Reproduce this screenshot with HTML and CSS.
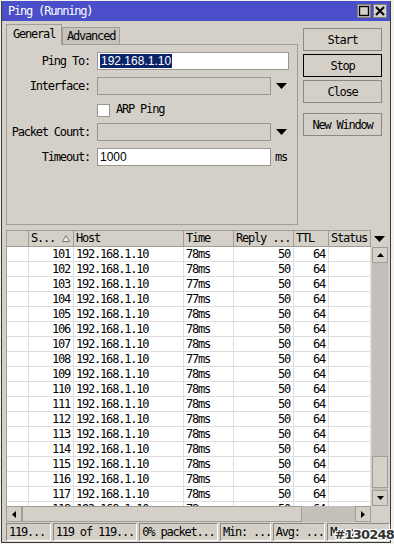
FILE: index.html
```html
<!DOCTYPE html>
<html lang="en">
<head>
    <meta charset="UTF-8">
    <meta name="viewport" content="width=device-width, initial-scale=1.0">
    <title>Ping (Running)</title>
    <link rel="stylesheet" href="styles.css">
</head>
<body>
    <div class="window">
        <div class="titlebar">
            <span class="title">Ping (Running)</span>
            <div class="title-buttons">
                <span class="tbtn"><svg width="12" height="12" viewBox="0 0 12 12"><rect x="1.5" y="1.5" width="9" height="9" fill="none" stroke="#000" stroke-width="1.4"/></svg></span>
                <span class="tbtn"><svg width="12" height="12" viewBox="0 0 12 12"><path d="M2 2 L10 10 M10 2 L2 10" stroke="#000" stroke-width="2"/></svg></span>
            </div>
        </div>

        <div class="top">
            <div class="tabs-area">
                <div class="tabs">
                    <div class="tab active">General</div>
                    <div class="tab">Advanced</div>
                </div>
                <div class="panel">
                    <div class="row">
                        <span class="label">Ping To:</span>
                        <span class="field wide"><span class="selected">192.168.1.10</span></span>
                    </div>
                    <div class="row">
                        <span class="label">Interface:</span>
                        <span class="field disabled"></span>
                        <span class="drop"><svg width="11" height="6" viewBox="0 0 11 6"><polygon points="0,0 11,0 5.5,6" fill="#000"/></svg></span>
                    </div>
                    <div class="row short">
                        <span class="label"></span>
                        <span class="check"></span>
                        <span class="check-label">ARP Ping</span>
                    </div>
                    <div class="row">
                        <span class="label">Packet Count:</span>
                        <span class="field disabled"></span>
                        <span class="drop"><svg width="11" height="6" viewBox="0 0 11 6"><polygon points="0,0 11,0 5.5,6" fill="#000"/></svg></span>
                    </div>
                    <div class="row">
                        <span class="label">Timeout:</span>
                        <span class="field">1000</span>
                        <span class="unit">ms</span>
                    </div>
                </div>
            </div>
            <div class="actions">
                <button class="btn">Start</button>
                <button class="btn focused">Stop</button>
                <button class="btn">Close</button>
                <button class="btn spaced">New Window</button>
            </div>
        </div>

        <div class="table">
            <div class="thead">
                <div class="th"></div>
                <div class="th">S...<svg class="sort" width="8" height="7" viewBox="0 0 8 7"><polygon points="4,0.5 7.5,6.5 0.5,6.5" fill="#eee" stroke="#777"/></svg></div>
                <div class="th">Host</div>
                <div class="th">Time</div>
                <div class="th">Reply ...</div>
                <div class="th">TTL</div>
                <div class="th">Status</div>
                <div class="th menu"><svg width="11" height="6" viewBox="0 0 11 6"><polygon points="0,0 11,0 5.5,6" fill="#000"/></svg></div>
            </div>
            <div class="tbody">
                <div class="rows">
                    <div class="tr"><span></span><span class="num">101</span><span>192.168.1.10</span><span>78ms</span><span class="num">50</span><span class="num">64</span><span></span></div>
                    <div class="tr"><span></span><span class="num">102</span><span>192.168.1.10</span><span>78ms</span><span class="num">50</span><span class="num">64</span><span></span></div>
                    <div class="tr"><span></span><span class="num">103</span><span>192.168.1.10</span><span>77ms</span><span class="num">50</span><span class="num">64</span><span></span></div>
                    <div class="tr"><span></span><span class="num">104</span><span>192.168.1.10</span><span>77ms</span><span class="num">50</span><span class="num">64</span><span></span></div>
                    <div class="tr"><span></span><span class="num">105</span><span>192.168.1.10</span><span>78ms</span><span class="num">50</span><span class="num">64</span><span></span></div>
                    <div class="tr"><span></span><span class="num">106</span><span>192.168.1.10</span><span>78ms</span><span class="num">50</span><span class="num">64</span><span></span></div>
                    <div class="tr"><span></span><span class="num">107</span><span>192.168.1.10</span><span>78ms</span><span class="num">50</span><span class="num">64</span><span></span></div>
                    <div class="tr"><span></span><span class="num">108</span><span>192.168.1.10</span><span>77ms</span><span class="num">50</span><span class="num">64</span><span></span></div>
                    <div class="tr"><span></span><span class="num">109</span><span>192.168.1.10</span><span>78ms</span><span class="num">50</span><span class="num">64</span><span></span></div>
                    <div class="tr"><span></span><span class="num">110</span><span>192.168.1.10</span><span>78ms</span><span class="num">50</span><span class="num">64</span><span></span></div>
                    <div class="tr"><span></span><span class="num">111</span><span>192.168.1.10</span><span>78ms</span><span class="num">50</span><span class="num">64</span><span></span></div>
                    <div class="tr"><span></span><span class="num">112</span><span>192.168.1.10</span><span>78ms</span><span class="num">50</span><span class="num">64</span><span></span></div>
                    <div class="tr"><span></span><span class="num">113</span><span>192.168.1.10</span><span>78ms</span><span class="num">50</span><span class="num">64</span><span></span></div>
                    <div class="tr"><span></span><span class="num">114</span><span>192.168.1.10</span><span>78ms</span><span class="num">50</span><span class="num">64</span><span></span></div>
                    <div class="tr"><span></span><span class="num">115</span><span>192.168.1.10</span><span>78ms</span><span class="num">50</span><span class="num">64</span><span></span></div>
                    <div class="tr"><span></span><span class="num">116</span><span>192.168.1.10</span><span>78ms</span><span class="num">50</span><span class="num">64</span><span></span></div>
                    <div class="tr"><span></span><span class="num">117</span><span>192.168.1.10</span><span>78ms</span><span class="num">50</span><span class="num">64</span><span></span></div>
                    <div class="tr"><span></span><span class="num">118</span><span>192.168.1.10</span><span>78ms</span><span class="num">50</span><span class="num">64</span><span></span></div>
                </div>
                <div class="vscroll">
                    <span class="sbtn"><svg width="7" height="4" viewBox="0 0 7 4"><polygon points="3.5,0 7,4 0,4" fill="#000"/></svg></span>
                    <span class="vtrack"></span>
                    <span class="vthumb"></span>
                    <span class="vtrack small"></span>
                    <span class="sbtn"><svg width="7" height="4" viewBox="0 0 7 4"><polygon points="0,0 7,0 3.5,4" fill="#000"/></svg></span>
                </div>
            </div>
            <div class="hscroll">
                <span class="sbtn"><svg width="4" height="7" viewBox="0 0 4 7"><polygon points="4,0 4,7 0,3.5" fill="#000"/></svg></span>
                <span class="hthumb"></span>
                <span class="htrack"></span>
                <span class="sbtn"><svg width="4" height="7" viewBox="0 0 4 7"><polygon points="0,0 4,3.5 0,7" fill="#000"/></svg></span>
                <span class="corner"></span>
            </div>
        </div>

        <div class="statusbar">
            <span class="cell c1">119...</span>
            <span class="cell c2">119 of 119...</span>
            <span class="cell c3">0% packet...</span>
            <span class="cell c4">Min: ...</span>
            <span class="cell c5">Avg: ...</span>
            <span class="cell c6">Max: ...</span>
        </div>
        <span class="stamp">#130248</span>
    </div>
</body>
</html>
```

FILE: styles.css
```css
body {
    margin: 0;
    background: #f2f1ee;
    font-family: "DejaVu Sans Mono", "Liberation Mono", monospace;
    font-size: 12px;
    letter-spacing: -1.2px;
    color: #000;
}
.window {
    position: relative;
    box-sizing: border-box;
    margin: 1px 0 0 1px;
    width: 390px;
    height: 542px;
    border: 1px solid #3c3c3c;
    border-top: none;
    background: #d4d0c8;
}
.titlebar {
    height: 20px;
    background: #4a4ec8;
    display: flex;
    align-items: center;
    justify-content: space-between;
    padding: 0 3px 0 6px;
}
.title {
    color: #fff;
}
.title-buttons {
    display: flex;
    gap: 2px;
}
.tbtn {
    width: 14px;
    height: 14px;
    box-sizing: border-box;
    background: #d4d0c8;
    border: 1px solid #808080;
    display: flex;
    align-items: center;
    justify-content: center;
}
.top {
    display: flex;
    padding-left: 4px;
}
.tabs-area {
    width: 292px;
}
.tabs {
    display: flex;
    align-items: flex-end;
    height: 20px;
    margin-top: 3px;
}
.tab {
    box-sizing: border-box;
    height: 17px;
    width: 58px;
    padding-left: 4px;
    border: 1px solid #a09c96;
    border-bottom: none;
    background: #c6c3bd;
    line-height: 16px;
}
.tab.active {
    height: 21px;
    width: 56px;
    margin-bottom: -1px;
    background: #d4d0c8;
    position: relative;
    line-height: 18px;
    padding-left: 6px;
}
.panel {
    box-sizing: border-box;
    height: 181px;
    border: 1px solid #a09c96;
    padding-top: 7px;
    display: flex;
    flex-direction: column;
    gap: 7px;
}
.row {
    display: flex;
    align-items: center;
    height: 18px;
}
.row.short {
    height: 14px;
    align-items: flex-start;
}
.label {
    width: 83px;
    margin-right: 7px;
    text-align: right;
}
.field {
    box-sizing: border-box;
    width: 174px;
    height: 18px;
    background: #fff;
    border: 1px solid #9a9792;
    padding-left: 2px;
    line-height: 16px;
    font-family: "Liberation Sans", Arial, sans-serif;
    font-size: 12px;
    letter-spacing: 0;
}
.field.wide {
    width: 192px;
}
.field.disabled {
    background: #d4d0c8;
}
.selected {
    background: #0a246a;
    color: #fff;
    padding: 0 1px;
}
.drop {
    margin-left: 5px;
    display: flex;
}
.unit {
    margin-left: 4px;
}
.check {
    width: 13px;
    height: 13px;
    box-sizing: border-box;
    background: #fff;
    border: 1px solid #9a9792;
    margin-top: 2px;
}
.check-label {
    margin-left: 6px;
    line-height: 14px;
}
.actions {
    display: flex;
    flex-direction: column;
    gap: 3px;
    margin-left: 5px;
    padding-top: 7px;
}
.btn {
    box-sizing: border-box;
    width: 79px;
    height: 23px;
    background: #d4d0c8;
    border: 1px solid #8c8984;
    font: inherit;
    letter-spacing: inherit;
    padding: 0;
}
.btn.focused {
    border-color: #000;
}
.btn.spaced {
    margin-top: 7px;
}
.table {
    margin: 5px 0 0 4px;
    width: 382px;
}
.thead {
    display: grid;
    grid-template-columns: 23px 45px 110px 50px 60px 35px 42px 17px;
    height: 17px;
    background: #d4d0c8;
}
.th {
    box-sizing: border-box;
    border: 1px solid #a09c96;
    border-left: none;
    padding-left: 2px;
    line-height: 15px;
    display: flex;
    align-items: center;
    white-space: nowrap;
}
.th:first-child {
    border-left: 1px solid #a09c96;
}
.th .sort {
    margin: 0 3px 0 auto;
    flex: none;
}
.th.menu {
    justify-content: center;
    padding: 0;
    border: none;
}
.tbody {
    display: flex;
    height: 259px;
}
.rows {
    width: 365px;
    overflow: hidden;
    background: #fff;
    border-left: 1px solid #a09c96;
    box-sizing: border-box;
}
.tr {
    display: grid;
    grid-template-columns: 22px 45px 110px 50px 60px 35px 42px;
    height: 15px;
}
.tr span {
    box-sizing: border-box;
    border-right: 1px solid #dedede;
    border-bottom: 1px solid #dedede;
    padding: 0 3px 0 2px;
    line-height: 14px;
    white-space: nowrap;
}
.tr .num {
    text-align: right;
}
.vscroll {
    width: 17px;
    display: flex;
    flex-direction: column;
    background: #d4d0c8;
    padding-left: 1px;
    box-sizing: border-box;
}
.sbtn {
    box-sizing: border-box;
    width: 16px;
    height: 16px;
    background: #d4d0c8;
    border: 1px solid #a09c96;
    display: flex;
    align-items: center;
    justify-content: center;
    flex: none;
}
.vtrack {
    flex: 1;
    background: #c3c0ba;
}
.vtrack.small {
    flex: none;
    height: 2px;
}
.vthumb {
    height: 32px;
    box-sizing: border-box;
    background: #d4d0c8;
    border: 1px solid #a09c96;
}
.hscroll {
    display: flex;
    height: 16px;
}
.hthumb {
    width: 280px;
    box-sizing: border-box;
    background: #d4d0c8;
    border: 1px solid #a09c96;
}
.htrack {
    width: 53px;
    background: #c3c0ba;
}
.corner {
    width: 17px;
    background: #d4d0c8;
}
.statusbar {
    display: flex;
    gap: 2px;
    margin: 1px 0 0 4px;
    height: 18px;
}
.cell {
    box-sizing: border-box;
    border: 1px solid;
    border-color: #8c8984 #fff #fff #8c8984;
    padding-left: 2px;
    line-height: 16px;
    white-space: nowrap;
    overflow: hidden;
}
.c1 { width: 45px; }
.c2 { width: 85px; }
.c3 { width: 79px; }
.c4 { width: 51px; }
.c5 { width: 53px; }
.c6 { width: 63px; }
.stamp {
    position: absolute;
    right: -4px;
    bottom: 0;
    font-family: "DejaVu Sans", sans-serif;
    font-weight: bold;
    font-size: 13px;
    letter-spacing: -0.8px;
    color: #333;
    text-shadow: 1px 0 #fff, -1px 0 #fff, 0 1px #fff, 0 -1px #fff, 1px 1px #fff, -1px -1px #fff, 1px -1px #fff, -1px 1px #fff;
}
```
